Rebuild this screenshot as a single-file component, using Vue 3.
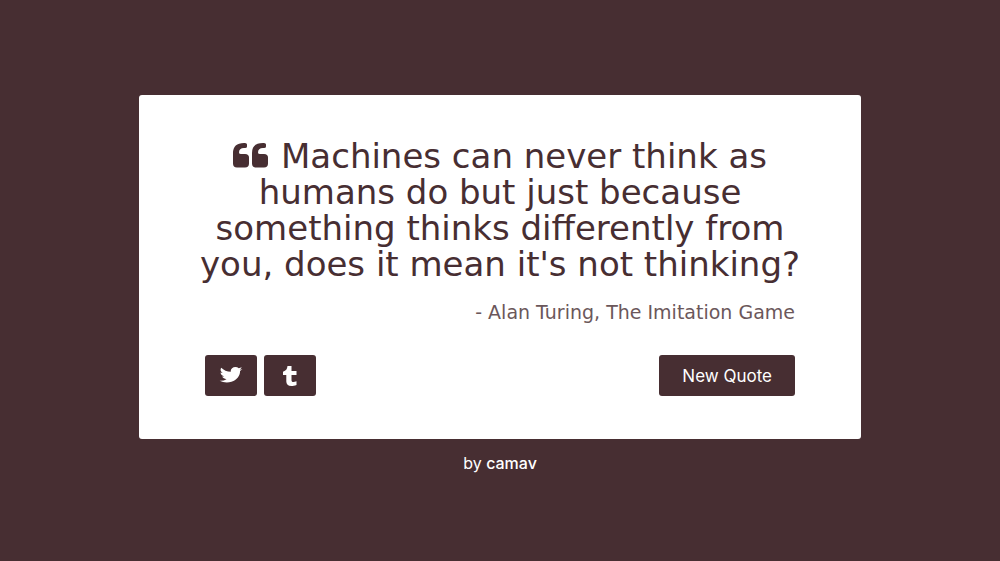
<script setup>
import { ref } from 'vue'

const quotes = [
  {
    text: "Machines can never think as\nhumans do but just because\nsomething thinks differently from\nyou, does it mean it's not thinking?",
    author: 'Alan Turing, The Imitation Game',
  },
]
const index = ref(0)
function nextQuote() {
  index.value = (index.value + 1) % quotes.length
}
</script>

<template>
  <main class="page">
    <section class="quote-box">
      <p class="quote-text">
        <svg class="quote-mark" viewBox="0 0 36 26" aria-hidden="true">
          <path d="M4 25.500Q0 25.500 0 21.500V11Q0 1 11 1H12Q14 1 14 2.500V4.500Q14 6 12 6H11Q6 6 6 10.500Q6 12 8 12H12Q16 12 16 15.500V21.500Q16 25.500 12 25.500Z" />
          <path d="M23 25.500Q19 25.500 19 21.500V11Q19 1 30 1H31Q33 1 33 2.500V4.500Q33 6 31 6H30Q25 6 25 10.500Q25 12 27 12H31Q35 12 35 15.500V21.500Q35 25.500 31 25.500Z" />
        </svg>
        <span class="lines">{{ quotes[index].text }}</span>
      </p>
      <p class="quote-author">- {{ quotes[index].author }}</p>
      <div class="actions">
        <a class="button share" href="#twitter" aria-label="Tweet this quote">
          <svg class="twitter" viewBox="0 0 1664 1408" preserveAspectRatio="none" aria-hidden="true">
            <path d="M1620 156q-67 98-162 167 1 14 1 42 0 130-38 259.500T1305.500 873 1121 1083.500t-258 146-323 54.500q-271 0-496-145 35 4 78 4 225 0 401-138-105-2-188-64.500T221 781q33 5 61 5 43 0 85-11-112-23-185.500-111.500T108 458v-4q68 38 146 41-66-44-105-115t-39-154q0-88 44-163 121 149 294.500 238.500T820 401q-8-38-8-74 0-134 94.500-228.500T1135 4q140 0 236 102 109-21 205-78-37 115-142 178 93-10 186-50z" />
          </svg>
        </a>
        <a class="button share" href="#tumblr" aria-label="Post this quote to Tumblr">
          <svg class="tumblr" viewBox="0 0 14 20" aria-hidden="true">
            <path d="M4.500 0H8.500V5H13.500V9H8.500V14C8.500 16.500 10.500 16.300 13.500 15.300V19C11.500 19.700 10 20 8.500 20C5 20 3.300 18.200 3.300 15.500V9H0V5.700C3 4.800 4.200 3 4.500 0Z" />
          </svg>
        </a>
        <button class="button new-quote" type="button" @click="nextQuote">New Quote</button>
      </div>
    </section>
    <footer class="credit">by <a href="#camav">camav</a></footer>
  </main>
</template>

<style>
body {
  background: #472e32;
}
</style>

<style scoped>
.page {
  box-sizing: border-box;
  min-height: 100vh;
  padding: 95px 16px 16px;
  display: flex;
  flex-direction: column;
  align-items: center;
  background: #472e32;
  color: #472e32;
  font-family: Inter, "Liberation Sans", sans-serif;
}
.quote-box {
  box-sizing: border-box;
  width: 100%;
  max-width: 722px;
  padding: 43px 48px;
  border-radius: 3px;
  background: #fff;
}
.quote-text {
  margin: 0;
  text-align: center;
  font-family: "DejaVu Sans", sans-serif;
  font-size: 34px;
  line-height: 36px;
}
.lines {
  white-space: pre-line;
}
.quote-mark {
  width: 36px;
  height: 26px;
  margin-right: 12px;
  fill: currentColor;
}
.quote-author {
  margin: 18px 18px 0;
  text-align: right;
  font-family: "DejaVu Sans", sans-serif;
  font-size: 19px;
  line-height: 24px;
  opacity: 0.8;
}
.actions {
  display: flex;
  gap: 7px;
  margin: 31px 18px 0;
}
.button {
  display: flex;
  align-items: center;
  justify-content: center;
  box-sizing: border-box;
  height: 41px;
  border: 0;
  border-radius: 3px;
  background: #472e32;
  color: #fff;
  font-family: inherit;
  font-size: 17px;
  cursor: pointer;
}
.share {
  width: 52px;
}
.new-quote {
  margin-left: auto;
  padding: 0 23px;
}
.button svg {
  fill: currentColor;
}
.twitter {
  width: 24px;
  height: 17px;
}
.tumblr {
  width: 14px;
  height: 20px;
}
.credit {
  margin-top: 14px;
  color: #fff;
  font-size: 16px;
  line-height: 20px;
}
.credit a {
  color: #fff;
  font-weight: 500;
  text-decoration: none;
}
</style>
